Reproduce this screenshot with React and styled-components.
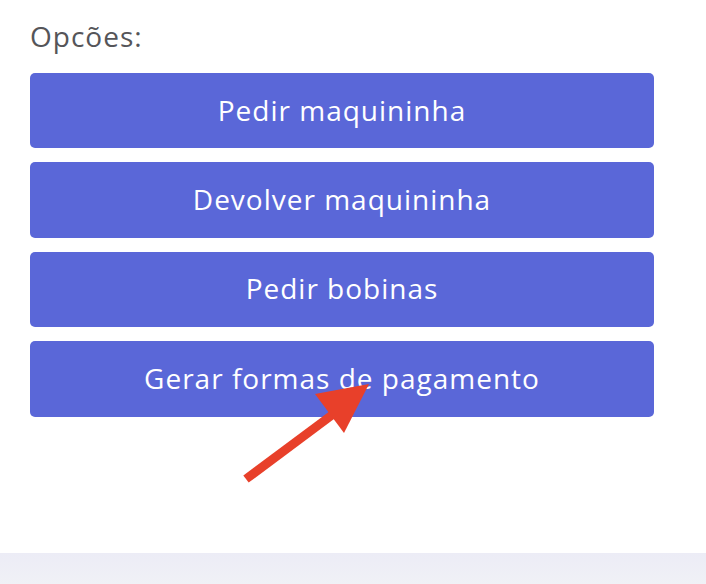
import styled, { createGlobalStyle } from 'styled-components'

const GlobalStyle = createGlobalStyle`
  html, body {
    margin: 0;
    padding: 0;
    background: #ffffff;
  }
  body {
    font-family: 'Open Sans', 'Liberation Sans', sans-serif;
  }
`

const opcoes = [
  'Pedir maquininha',
  'Devolver maquininha',
  'Pedir bobinas',
  'Gerar formas de pagamento',
]

export default function App() {
  return (
    <>
      <GlobalStyle />
      <SCPage>
        <SCConteudo>
          <SCTitulo>Opcões:</SCTitulo>
          <SCLista>
            {opcoes.map((texto) => (
              <SCBotao key={texto}>{texto}</SCBotao>
            ))}
          </SCLista>
        </SCConteudo>
        <SCRodape />
        <SCSeta width="706" height="584" viewBox="0 0 706 584">
          <line x1="246" y1="479" x2="332" y2="415" stroke="#e8402a" strokeWidth="9" />
          <polygon points="369,384 315,394 344,433" fill="#e8402a" />
        </SCSeta>
      </SCPage>
    </>
  )
}

const SCPage = styled.div`
  position: relative;
  width: 706px;
  height: 584px;
  display: flex;
  flex-direction: column;
  overflow: hidden;
`

const SCConteudo = styled.main`
  flex: 1;
  padding: 19px 52px 0 30px;
`

const SCTitulo = styled.h3`
  margin: 0;
  font-size: 28px;
  font-weight: 400;
  letter-spacing: 1px;
  line-height: 34px;
  color: #555559;
`

const SCLista = styled.div`
  margin-top: 20px;
  display: flex;
  flex-direction: column;
  gap: 14px;
`

const SCBotao = styled.button`
  height: 75.4px;
  width: 100%;
  padding: 0 0 2px;
  border: none;
  border-radius: 5px;
  background-color: #5a67d8;
  color: #ffffff;
  font-family: 'Open Sans', 'Liberation Sans', sans-serif;
  font-size: 28px;
  font-weight: 400;
  letter-spacing: 1px;
  cursor: pointer;
`

const SCRodape = styled.footer`
  height: 31px;
  background: linear-gradient(#ececf6, #f0f1f6);
`

const SCSeta = styled.svg`
  position: absolute;
  left: 0;
  top: 0;
  pointer-events: none;
`
